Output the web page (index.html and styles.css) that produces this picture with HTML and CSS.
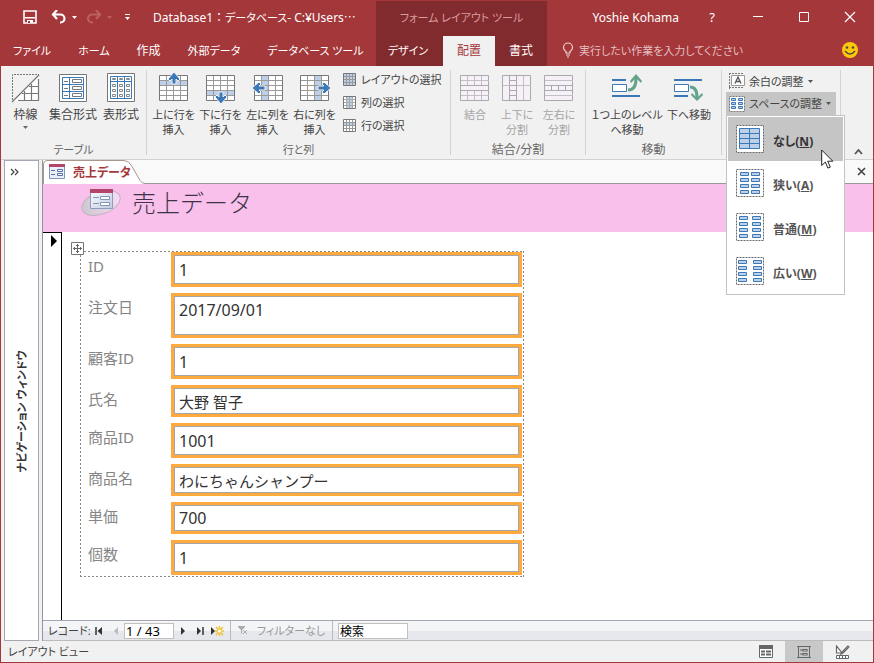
FILE: index.html
```html
<!DOCTYPE html>
<html lang="ja">
<head>
<meta charset="utf-8">
<title>Database1</title>
<link rel="stylesheet" href="styles.css">
</head>
<body>
<div class="window">
  <header class="header">
    <div class="header-left">
      <div class="title-row">
        <div class="quick">
          <button class="qa qa-save" aria-label="上書き保存"><svg width="14" height="14" viewBox="0 0 14 14"><path d="M1 1h12v12H1z" fill="none" stroke="#fff" stroke-width="1.600"/><path d="M2 7h10v1.500H2zM4 10h6v3H4z" fill="#fff"/><path d="M5 11h2v2H5z" fill="#a4373a"/></svg></button>
          <button class="qa qa-undo" aria-label="元に戻す"><svg width="28" height="14" viewBox="0 0 28 14"><path d="M6 0L2 4.500 6 9M2 4.500h7.500a4 4 0 0 1 0 8H9" fill="none" stroke="#fff" stroke-width="2.200"/><path d="M21 6h5l-2.500 3z" fill="#fff"/></svg></button>
          <button class="qa qa-redo" aria-label="やり直し"><svg width="28" height="14" viewBox="0 0 28 14"><path d="M10 0l4 4.500L10 9M14 4.500H6a4 4 0 0 0 0 8h1" fill="none" stroke="#bd5f62" stroke-width="2.200"/><path d="M21 6h5l-2.500 3z" fill="#bd5f62"/></svg></button>
          <button class="qa" aria-label="カスタマイズ"><svg width="7" height="8" viewBox="0 0 7 8"><path d="M1 1h5v1H1zM1 4h5L3.500 7z" fill="#fff"/></svg></button>
        </div>
        <span class="app-title">Database1<span class="full">：</span><span class="kana">データベース</span>- C:¥Users<span class="full">…</span></span>
      </div>
      <nav class="tabs">
        <a href="#" class="kana">ファイル</a><a href="#" class="kana">ホーム</a><a href="#">作成</a><a href="#" class="kana">外部データ</a><a href="#" class="kana">データベース ツール</a>
      </nav>
    </div>
    <div class="header-context">
      <div class="context-title kana">フォーム レイアウト ツール</div>
      <nav class="context-tabs"><a href="#" class="kana">デザイン</a><a href="#" class="active">配置</a><a href="#">書式</a></nav>
    </div>
    <div class="header-right">
      <div class="title-row window-row">
        <span class="user">Yoshie Kohama</span>
        <button class="win" aria-label="ヘルプ">?</button>
        <button class="win" aria-label="最小化"><svg width="12" height="12"><path d="M1 5.500h10" stroke="#fff"/></svg></button>
        <button class="win" aria-label="最大化"><svg width="12" height="12"><path d="M1.500 1.500h9v9h-9z" fill="none" stroke="#fff"/></svg></button>
        <button class="win" aria-label="閉じる"><svg width="12" height="12"><path d="M1 1l10 10M11 1L1 11" stroke="#fff" stroke-width="1.200"/></svg></button>
      </div>
      <div class="tell-row">
        <svg width="12" height="16" viewBox="0 0 12 16"><path d="M4 11V9.500C2.500 8.500 1.500 7 1.500 5.500a4.500 4.500 0 0 1 9 0C10.500 7 9.500 8.500 8 9.500V11zM4 13h4M5 15h2" fill="none" stroke="#f0d5d6" stroke-width="1.200"/></svg>
        <a href="#" class="kana">実行したい作業を入力してください</a>
        <button class="smile" aria-label="フィードバック"><svg width="18" height="18" viewBox="0 0 18 18"><circle cx="9" cy="9" r="8" fill="#fdc70c"/><circle cx="6" cy="6.500" r="1.300" fill="#4b4a3a"/><circle cx="12" cy="6.500" r="1.300" fill="#4b4a3a"/><path d="M4 10q5 6 10 0" fill="none" stroke="#4b4a3a" stroke-width="1.300"/></svg></button>
      </div>
    </div>
  </header>

  <section class="ribbon">
    <div class="group g-table">
      <div class="tools">
        <button class="tool w47"><svg width="30" height="30" viewBox="0 0 30 30"><path d="M28 2L2 28h26z" fill="#fff"/><path d="M1.500 27V1.500H28" fill="none" stroke="#777" stroke-dasharray="2 1"/><path d="M1 29L28 2M7 27.500h20.500V6M20.500 11v17M13.500 18v10M11 20.500h17M18 13.500h10" fill="none" stroke="#777" stroke-width="1.200"/></svg><span>枠線</span><svg class="caret" width="5" height="3"><path d="M0 0h5L2.500 3z" fill="#666"/></svg></button>
        <button class="tool w48"><svg width="30" height="30" viewBox="0 0 30 30"><path d="M1.500 1.500h27v27h-27z" fill="#fff" stroke="#777"/><path d="M4.500 4.500h21v21h-21zM11.500 4v22M4 11.500h22M4 18.500h22" fill="none" stroke="#3b78b8"/><path d="M6 8.500h4M6 15.500h4M6 22.500h4M14.500 6.500h9v3h-9zM14.500 13.500h9v3h-9zM14.500 20.500h9v3h-9z" fill="none" stroke="#777"/></svg><span>集合形式</span></button>
        <button class="tool w48"><svg width="30" height="30" viewBox="0 0 30 30"><path d="M1.500 .5h27v28h-27z" fill="#fff" stroke="#777"/><path d="M4.500 3.500h21v22h-21zM11.500 3v23M18.500 3v23M4 8.500h22" fill="none" stroke="#3b78b8"/><path d="M6.500 5.500h3v1h-3zM13.500 5.500h3v1h-3zM20.500 5.500h3v1h-3zM6.500 11.500h3v2h-3zM13.500 11.500h3v2h-3zM20.500 11.500h3v2h-3zM6.500 16.500h3v2h-3zM13.500 16.500h3v2h-3zM20.500 16.500h3v2h-3zM6.500 21.500h3v2h-3zM13.500 21.500h3v2h-3zM20.500 21.500h3v2h-3z" fill="none" stroke="#888"/></svg><span>表形式</span></button>
      </div>
      <div class="caption kana">テーブル</div>
    </div>
    <div class="group g-rows">
      <div class="tools">
        <button class="tool w47 kana"><svg width="30" height="32" viewBox="0 0 30 32"><path d="M.5 3.500h28v25H.5z" fill="#fff"/><path d="M1 9h28v5H1z" fill="#bdd0e8"/><path d="M7.500 4v24M14.500 4v24M21.500 4v24M1 8.500h28M1 13.500h28M1 18.500h28M1 23.500h28" stroke="#999"/><path d="M.5 3.500h28v25H.5z" fill="none" stroke="#777"/><path d="M15 0l6 7-2 2-2-2v5h-4V7l-2 2-2-2z" fill="#3b78b8" stroke="#f1f1f1"/></svg><span>上に行を<br>挿入</span></button>
        <button class="tool w47 kana"><svg width="30" height="32" viewBox="0 0 30 32"><path d="M.5 3.500h28v25H.5z" fill="#fff"/><path d="M1 19h28v5H1z" fill="#bdd0e8"/><path d="M7.500 4v24M14.500 4v24M21.500 4v24M1 8.500h28M1 13.500h28M1 18.500h28M1 23.500h28" stroke="#999"/><path d="M.5 3.500h28v25H.5z" fill="none" stroke="#777"/><path d="M15 32l6-7-2-2-2 2v-5h-4v5l-2-2-2 2z" fill="#3b78b8" stroke="#f1f1f1"/></svg><span>下に行を<br>挿入</span></button>
        <button class="tool w47 kana"><svg width="32" height="32" viewBox="0 0 32 32"><path d="M2.500 3.500h28v25h-28z" fill="#fff"/><path d="M10 4h6v24h-6z" fill="#bdd0e8"/><path d="M9.500 4v24M16.500 4v24M23.500 4v24M3 8.500h28M3 13.500h28M3 18.500h28M3 23.500h28" stroke="#999"/><path d="M2.500 3.500h28v25h-28z" fill="none" stroke="#777"/><path d="M0 16l7-6 2 2-2 2h6v4H7l2 2-2 2z" fill="#3b78b8" stroke="#f1f1f1"/></svg><span>左に列を<br>挿入</span></button>
        <button class="tool w47 kana"><svg width="32" height="32" viewBox="0 0 32 32"><path d="M1.500 3.500h28v25h-28z" fill="#fff"/><path d="M16 4h6v24h-6z" fill="#bdd0e8"/><path d="M8.500 4v24M15.500 4v24M22.500 4v24M2 8.500h28M2 13.500h28M2 18.500h28M2 23.500h28" stroke="#999"/><path d="M1.500 3.500h28v25h-28z" fill="none" stroke="#777"/><path d="M32 16l-7-6-2 2 2 2h-6v4h6l-2 2 2 2z" fill="#3b78b8" stroke="#f1f1f1"/></svg><span>右に列を<br>挿入</span></button>
        <div class="stack kana">
          <button><svg width="14" height="14"><path d="M.5 .5h12v12H.5z" fill="#bdd0e8"/><path d="M3.500 1v12M6.500 1v12M9.500 1v12M1 3.500h12M1 6.500h12M1 9.500h12" stroke="#999"/><path d="M.5 .5h12v12H.5z" fill="none" stroke="#777"/></svg>レイアウトの選択</button>
          <button><svg width="14" height="14"><path d="M.5 .5h12v12H.5z" fill="#fff"/><path d="M4 1h5v12H4z" fill="#bdd0e8"/><path d="M3.500 1v12M6.500 1v12M9.500 1v12M1 3.500h12M1 6.500h12M1 9.500h12" stroke="#aaa"/><path d="M.5 .5h12v12H.5z" fill="none" stroke="#777"/></svg>列の選択</button>
          <button><svg width="14" height="14"><path d="M.5 .5h12v12H.5z" fill="#fff"/><path d="M1 4h12v3H1z" fill="#bdd0e8"/><path d="M3.500 1v12M6.500 1v12M9.500 1v12M1 3.500h12M1 6.500h12M1 9.500h12" stroke="#999"/><path d="M.5 .5h12v12H.5z" fill="none" stroke="#777"/></svg>行の選択</button>
        </div>
      </div>
      <div class="caption kana">行と列</div>
    </div>
    <div class="group g-merge">
      <div class="tools">
        <button class="tool w42 kana" disabled><svg width="30" height="32" viewBox="0 0 30 32"><path d="M.5 3.500h28v25H.5z" fill="#f6f1f8" stroke="#aaa"/><path d="M7.500 4v9M14.500 4v9M21.500 4v9M7.500 19v9M14.500 19v9M21.500 19v9M1 8.500h28M1 23.500h28" stroke="#c4bfc6"/><path d="M1 13.500h28M1 18.500h28" stroke="#aaa"/></svg><span>結合</span></button>
        <button class="tool w42 kana" disabled><svg width="30" height="32" viewBox="0 0 30 32"><path d="M.5 3.500h28v25H.5z" fill="#f6f1f8" stroke="#aaa"/><path d="M21.500 4v24M1 13.500h7M14 13.500h15" stroke="#c4bfc6"/><path d="M7.500 4v24M14.500 4v24M7 8.500h7M7 13.500h7M7 18.500h7M7 23.500h7" stroke="#aaa"/></svg><span>上下に<br>分割</span></button>
        <button class="tool w42 kana" disabled><svg width="30" height="32" viewBox="0 0 30 32"><path d="M.5 3.500h28v25H.5z" fill="#f6f1f8" stroke="#aaa"/><path d="M1 8.500h28M1 23.500h28" stroke="#c4bfc6"/><path d="M1 13.500h28M1 18.500h28M7.500 14v4M14.500 14v4M21.500 14v4" stroke="#aaa"/></svg><span>左右に<br>分割</span></button>
      </div>
      <div class="caption">結合/分割</div>
    </div>
    <div class="group g-move">
      <div class="tools">
        <button class="tool w76 kana"><svg width="32" height="32" viewBox="0 0 32 32"><path d="M1 8h14M1 24h28" stroke="#3b78b8" stroke-width="2"/><path d="M1.500 12.500h14v7h-14z" fill="#fff" stroke="#3b78b8"/><path d="M17 18q8 0 8-11" fill="none" stroke="#62a389" stroke-width="3"/><path d="M19 9l6-7 6 7-1 2-4-4h-2l-4 4z" fill="#62a389"/></svg><span>１つ上のレベル<br>へ移動</span></button>
        <button class="tool w48 kana"><svg width="32" height="32" viewBox="0 0 32 32"><path d="M1 8h28M1 24h14" stroke="#3b78b8" stroke-width="2"/><path d="M1.500 12.500h14v7h-14z" fill="#fff" stroke="#3b78b8"/><path d="M17 15q7 0 7 10" fill="none" stroke="#62a389" stroke-width="3"/><path d="M18 23l6 6 6-6-1-2-4 4h-2l-4-4z" fill="#62a389"/></svg><span>下へ移動</span></button>
      </div>
      <div class="caption">移動</div>
    </div>
    <div class="group place kana">
      <button class="drop"><svg width="16" height="16" viewBox="0 0 16 16"><path d="M.5 0v16M0 .5h15M0 14.500h15" stroke="#777" stroke-dasharray="2 1"/><path d="M2.500 2.500h13v10h-13z" fill="#fff" stroke="#999"/><path d="M6 10.500L9 4l3 6.500M7.500 8.500h3" fill="none" stroke="#555" stroke-width="1.300"/></svg>余白の調整<svg width="5" height="3"><path d="M0 0h5L2.500 3z" fill="#555"/></svg></button>
      <div class="drop-wrap">
        <button class="drop open" aria-expanded="true"><svg width="16" height="16" viewBox="0 0 16 16"><path d="M.5 .5h15v15H.5z" fill="#fff" stroke="#777" stroke-dasharray="2 1"/><path d="M2.500 2.500h4v2h-4zM9.500 2.500h4v2h-4zM2.500 6.500h4v2h-4zM9.500 6.500h4v2h-4zM2.500 10.500h4v2h-4zM9.500 10.500h4v2h-4z" fill="#bdd0e8" stroke="#3b78b8"/></svg>スペースの調整<svg width="5" height="3"><path d="M0 0h5L2.500 3z" fill="#555"/></svg></button>
        <div class="menu" role="menu">
          <button role="menuitem" class="hot"><svg width="28" height="28" viewBox="0 0 28 28"><path d="M.5 .5h27v27H.5z" fill="#fff" stroke="#666" stroke-dasharray="2 1"/><path d="M3.500 3.500h20v20h-20zM13.500 3v21M3 8.500h21M3 13.500h21M3 18.500h21" fill="#bdd0e8" stroke="#3b78b8"/></svg><span>なし(<u>N</u>)</span></button>
          <button role="menuitem"><svg width="28" height="28" viewBox="0 0 28 28"><path d="M.5 .5h27v27H.5z" fill="#fff" stroke="#666" stroke-dasharray="2 1"/><path d="M4.500 3.500h8v3h-8zM15.500 3.500h8v3h-8zM4.500 9.500h8v3h-8zM15.500 9.500h8v3h-8zM4.500 15.500h8v3h-8zM15.500 15.500h8v3h-8zM4.500 21.500h8v3h-8zM15.500 21.500h8v3h-8z" fill="#bdd0e8" stroke="#3b78b8"/></svg><span>狭い(<u>A</u>)</span></button>
          <button role="menuitem"><svg width="28" height="28" viewBox="0 0 28 28"><path d="M.5 .5h27v27H.5z" fill="#fff" stroke="#666" stroke-dasharray="2 1"/><path d="M3.500 3.500h8v3h-8zM16.500 3.500h8v3h-8zM3.500 9.500h8v3h-8zM16.500 9.500h8v3h-8zM3.500 15.500h8v3h-8zM16.500 15.500h8v3h-8zM3.500 21.500h8v3h-8zM16.500 21.500h8v3h-8z" fill="#bdd0e8" stroke="#3b78b8"/></svg><span>普通(<u>M</u>)</span></button>
          <button role="menuitem"><svg width="28" height="28" viewBox="0 0 28 28"><path d="M.5 .5h27v27H.5z" fill="#fff" stroke="#666" stroke-dasharray="2 1"/><path d="M2.500 3.500h8v3h-8zM17.500 3.500h8v3h-8zM2.500 9.500h8v3h-8zM17.500 9.500h8v3h-8zM2.500 15.500h8v3h-8zM17.500 15.500h8v3h-8zM2.500 21.500h8v3h-8zM17.500 21.500h8v3h-8z" fill="#bdd0e8" stroke="#3b78b8"/></svg><span>広い(<u>W</u>)</span></button>
          <svg class="pointer" width="13" height="20" viewBox="0 0 13 20"><path d="M.7 1v15.500l3.600-3.400 2.600 6 2.400-1-2.600-5.900h5.100z" fill="#fff" stroke="#222"/></svg>
        </div>
      </div>
    </div>
    <button class="collapse" aria-label="リボンを折りたたむ"><svg width="9" height="6"><path d="M1 5l3.500-4L8 5" fill="none" stroke="#555" stroke-width="1.800"/></svg></button>
  </section>

  <main class="work">
    <aside class="navpane">
      <button class="expand" aria-label="開く"><svg width="10" height="8"><path d="M1 1l3 3-3 3M5 1l3 3-3 3" fill="none" stroke="#444" stroke-width="1.200"/></svg></button>
      <div class="nav-title kana"><span>ナビゲーション ウィンドウ</span></div>
    </aside>
    <section class="doc">
      <div class="doc-tabs">
        <a href="#" class="doc-tab">
          <svg class="tab-shape" width="102" height="24" viewBox="0 0 102 24"><path d="M.5 24V4Q1 .5 4 .5h77q5 0 8 6l8 14q2 3 5 3V24z" fill="#fff"/><path d="M.5 24V4Q1 .5 4 .5h77q5 0 8 6l8 14q2 3 5 3" fill="none" stroke="#a8978c"/></svg>
          <svg class="tab-icon" width="16" height="16" viewBox="0 0 16 16"><path d="M.5 1.500h15v13H.5z" fill="#eaf0fa" stroke="#8496ba"/><path d="M0 0h16v3H0z" fill="#b3456b"/><path d="M2 6.500h4M2 10.500h4" stroke="#5a6da0"/><path d="M8.500 5.500h5v2h-5zM8.500 9.500h5v2h-5z" fill="#fff" stroke="#5a6da0"/></svg>
          <span>売上データ</span>
        </a>
        <button class="doc-close" aria-label="閉じる"><svg width="9" height="9"><path d="M1 1l7 7M8 1L1 8" stroke="#444" stroke-width="1.600"/></svg></button>
      </div>
      <div class="form-head">
        <svg width="42" height="32" viewBox="0 0 42 32"><defs><linearGradient id="disc"><stop offset="0" stop-color="#ccc7d0"/><stop offset="1" stop-color="#f7dcf2"/></linearGradient><linearGradient id="sheet" x2="1" y2="1"><stop offset="0" stop-color="#fff"/><stop offset="1" stop-color="#bfcae0"/></linearGradient></defs><ellipse cx="20" cy="19" rx="20" ry="11" transform="rotate(-20 20 19)" fill="url(#disc)" stroke="#c0b0c0"/><path d="M9.500 6.500h22v18h-22z" fill="url(#sheet)" stroke="#8d9dbd"/><path d="M9 5h23v4H9z" fill="#b3456b"/><path d="M12 13.500h6M12 19.500h6" stroke="#8494ba"/><path d="M19.500 12.500h9v3h-9zM19.500 18.500h9v3h-9z" fill="#fff" stroke="#8494ba"/></svg>
        <h1>売上データ</h1>
      </div>
      <div class="form-body">
        <div class="selector"><svg width="7" height="12"><path d="M0 0v12l6-6z" fill="#000"/></svg></div>
        <form class="layout">
          <svg class="handle" width="13" height="13" viewBox="0 0 13 13"><path d="M.5 .5h12v12H.5z" fill="#fff" stroke="#777"/><path d="M6.500 2v9M2 6.500h9M5 3.500h3M5 9.500h3M3.500 5v3M9.500 5v3" stroke="#666"/></svg>
          <label for="f1">ID</label><input id="f1" class="h35 num" value="1">
          <label for="f2">注文日</label><div class="tall"><input id="f2" class="num" value="2017/09/01"></div>
          <label for="f3">顧客ID</label><input id="f3" class="h35 num" value="1">
          <label for="f4">氏名</label><input id="f4" class="h32" value="大野 智子">
          <label for="f5">商品ID</label><input id="f5" class="h35 num" value="1001">
          <label for="f6">商品名</label><input id="f6" class="h32" value="わにちゃんシャンプー">
          <label for="f7">単価</label><input id="f7" class="h32 num" value="700">
          <label for="f8">個数</label><input id="f8" class="h35 num" value="1">
        </form>
      </div>
      <div class="record-bar">
        <label for="rec" class="kana">レコード:</label>
        <button aria-label="先頭"><svg width="8" height="8"><path d="M1 0v8" stroke="#333" stroke-width="1.500"/><path d="M7 0v8L2.500 4z" fill="#333"/></svg></button>
        <button aria-label="前" disabled><svg width="8" height="8"><path d="M6 0v8L2 4z" fill="#bbb"/></svg></button>
        <input id="rec" class="rec" value="1 / 43">
        <button aria-label="次"><svg width="8" height="8"><path d="M2 0v8l4-4z" fill="#333"/></svg></button>
        <button aria-label="最終"><svg width="8" height="8"><path d="M1 0v8l4-4z" fill="#333"/><path d="M7 0v8" stroke="#333" stroke-width="1.500"/></svg></button>
        <button aria-label="新規"><svg width="14" height="10" viewBox="0 0 14 10"><path d="M1 1v8l4-4z" fill="#333"/><path d="M9.500 0v10M5 5h9M6 1l7 8M13 1L6 9" stroke="#f0c437" stroke-width="1.500"/><circle cx="9.500" cy="5" r="1.500" fill="#fff"/></svg></button>
        <button class="filter kana" disabled><svg width="10" height="9" viewBox="0 0 10 9"><path d="M0 0h7v1L4 4v4L3 7V4L0 1z" fill="#aaa"/><path d="M5 4l4 4M9 4L5 8" stroke="#aaa"/></svg>フィルターなし</button>
        <input class="search" value="検索" aria-label="検索">
      </div>
    </section>
  </main>

  <footer class="status">
    <span class="kana">レイアウト ビュー</span>
    <div class="views">
      <button aria-label="フォーム ビュー"><svg width="14" height="13" viewBox="0 0 14 13"><path d="M.5 .5h13v12H.5z" fill="#fff" stroke="#666"/><path d="M0 0h14v4H0z" fill="#666"/><path d="M2 6.500h4M2 9.500h4M7 6.500h5M7 9.500h5" stroke="#666" stroke-width="2"/></svg></button>
      <button class="on" aria-label="レイアウト ビュー"><svg width="14" height="14" viewBox="0 0 14 14"><path d="M1.500 1v12M12.500 1v12M0 1.500h14M0 12.500h14" stroke="#666"/><path d="M3 5h3M3 9h3" stroke="#666"/><path d="M6 4.500h4v1.500H6zM6 8.500h4V10H6z" fill="#fff" stroke="#666" stroke-width="1.200"/></svg></button>
      <button aria-label="デザイン ビュー"><svg width="15" height="14" viewBox="0 0 15 14"><path d="M1.500 1v7H7zM13 1L7 7l-1 2 2-1 6-6z" fill="#fff" stroke="#666" stroke-width="1.200"/><path d="M1.500 10.500h12v3h-12zM4.500 11v2M7.500 11v2M10.500 11v2" fill="#fff" stroke="#666"/></svg></button>
    </div>
  </footer>
</div>
</body>
</html>
```
FILE: styles.css
```css
* { box-sizing: border-box; }
html, body { height: 100%; margin: 0; }
body {
  font: 12px/15px "Noto Sans", "Noto Sans CJK JP", sans-serif;
  font-feature-settings: "palt";
  color: #444;
}
button, input {
  font: inherit;
  font-feature-settings: inherit;
  color: inherit;
  border: 0;
  padding: 0;
  margin: 0;
  background: none;
  border-radius: 0;
}
a { color: inherit; text-decoration: none; }
svg { display: block; flex: none; }
.kana { font-size: 11px; }
.full { font-family: "Noto Sans CJK JP", sans-serif; font-feature-settings: normal; }

.window {
  min-height: 100vh;
  display: flex;
  flex-direction: column;
  border: 1px solid #a4373a;
  border-top: 0;
  background: #f1f1f1;
}

/* Title bar and tabs */
.header { display: flex; height: 66px; background: #a4373a; color: #fff; }
.header-left { flex: none; width: 375px; }
.title-row { display: flex; align-items: center; height: 34px; margin-bottom: 2px; white-space: nowrap; }
.quick { display: flex; align-items: center; width: 152px; padding-left: 22px; }
.qa-save { margin-right: 14px; }
.qa-undo { margin-right: 7px; }
.qa-redo { margin-right: 10px; }
.tabs { display: flex; gap: 27px; padding: 7px 0 0 12px; white-space: nowrap; }
.header-context {
  flex: none;
  width: 171px;
  margin-top: 1px;
  background: #822b2e;
  display: flex;
  flex-direction: column;
}
.context-title { height: 35px; line-height: 33px; text-align: center; color: #d99c9e; }
.context-tabs { display: flex; flex: 1; line-height: 29px; }
.context-tabs a { flex: 1 1 0; text-align: center; }
.context-tabs a:first-child { flex: 0 0 67px; padding-right: 3px; }
.context-tabs .active { background: #f1f1f1; color: #a4373a; }
.header-right { flex: 1; min-width: 0; }
.window-row { justify-content: flex-end; }
.user { margin-right: 10px; }
.win { width: 46px; height: 32px; display: grid; place-items: center; font-size: 13px; }
.tell-row { display: flex; align-items: center; height: 28px; padding: 0 14px 0 15px; gap: 5px; color: #e3bfc0; white-space: nowrap; }
.smile { margin-left: auto; }

/* Ribbon */
.ribbon { display: flex; height: 94px; padding-top: 4px; border-bottom: 1px solid #d2d2d2; white-space: nowrap; }
.group {
  flex: none;
  display: flex;
  flex-direction: column;
  justify-content: space-between;
  height: 85px;
  padding: 0 3px;
  border-right: 1px solid #d2d2d2;
}
.g-table { width: 146px; padding: 0 1px; }
.g-rows { width: 304px; }
.g-merge { width: 135px; }
.g-move { width: 136px; }
.tools { display: flex; align-items: flex-start; padding-top: 2px; }
.caption { text-align: center; line-height: 10px; color: #666; }
.tool { flex: none; display: flex; flex-direction: column; align-items: center; text-align: center; }
.tool > svg:first-child { height: 32px; margin-bottom: 3px; }
.tool .caret { margin-top: 4px; }
.tool:disabled { color: #a5a5a5; }
.w42 { width: 42px; }
.w47 { width: 47px; }
.w48 { width: 48px; }
.w76 { width: 76px; }
.stack { display: flex; flex-direction: column; gap: 8px; padding: 0 0 0 5px; }
.stack button { display: flex; align-items: center; gap: 4px; }
.place { width: 119px; padding: 0 4px; justify-content: flex-start; }
.drop { display: flex; align-items: center; gap: 4px; height: 22px; padding: 0 3px; }
.drop.open { background: #c5c5c5; width: 110px; height: 23px; }
.drop-wrap { position: relative; }
.menu {
  position: absolute;
  z-index: 5;
  top: 23px;
  left: 0;
  width: 119px;
  padding: 1px;
  background: #fff;
  border: 1px solid #c3c3c3;
}
.menu button { display: flex; align-items: center; gap: 9px; width: 100%; height: 44px; padding-left: 8px; font-size: 12px; font-weight: 700; color: #555; }
.menu span { padding-top: 4px; }
.menu .hot { background: #c5c5c5; color: #333; }
.pointer { position: absolute; left: 94px; top: 33px; }
.collapse { align-self: flex-end; margin: 0 10px 4px auto; }

/* Work area */
.work { flex: 1; display: flex; padding-left: 3px; }
.navpane {
  flex: none;
  width: 35px;
  margin-right: 3px;
  display: flex;
  flex-direction: column;
  background: #fff;
  border: 1px solid #a5a8b2;
}
.expand { height: 22px; padding-left: 5px; }
.nav-title { flex: 1; display: grid; place-items: center; font-weight: 700; color: #333; }
.nav-title span { writing-mode: vertical-rl; text-orientation: sideways; transform: rotate(180deg); white-space: nowrap; }
.doc { flex: 1; min-width: 0; display: flex; flex-direction: column; background: #fff; border-left: 1px solid #92959f; }
.doc-tabs { display: flex; justify-content: space-between; height: 24px; background: #f9f9f9; border-bottom: 1px solid #999; }
.doc-tab { position: relative; display: flex; align-items: center; gap: 8px; width: 102px; height: 24px; padding-left: 6px; font-weight: 700; color: #a4373a; white-space: nowrap; }
.tab-shape { position: absolute; left: 0; top: 0; }
.tab-icon, .doc-tab span { position: relative; }
.doc-close { padding: 0 7px; }
.form-head { display: flex; height: 48px; padding-left: 38px; gap: 9px; background: #f8c0eb; color: #3b3348; }
.form-head h1 { margin: 0; font: 300 24px/36px "Noto Sans CJK JP", sans-serif; font-feature-settings: normal; }
.form-body { flex: 1; display: flex; font-feature-settings: normal; }
.selector { flex: none; width: 19px; padding: 2px 0 0 8px; border-top: 1px solid #000; border-right: 1px solid #000; }
.layout {
  position: relative;
  align-self: flex-start;
  display: grid;
  grid-template-columns: 83px 351px;
  row-gap: 6px;
  margin: 19px 0 20px 18px;
  padding: 1px 2px 2px 8px;
  background:
    repeating-linear-gradient(90deg, #888 0 2px, transparent 2px 4px) top / 100% 1px no-repeat,
    repeating-linear-gradient(90deg, #888 0 2px, transparent 2px 4px) bottom / 100% 1px no-repeat,
    repeating-linear-gradient(#888 0 2px, transparent 2px 4px) left / 1px 100% no-repeat,
    repeating-linear-gradient(#888 0 2px, transparent 2px 4px) right / 1px 100% no-repeat;
  font-size: 15px;
}
.layout label { line-height: 28px; height: 28px; color: #858585; }
.layout > input, .tall {
  width: 100%;
  border: 3px solid #ffa93f;
  outline: 1px solid #a6a6a6;
  outline-offset: -4px;
  padding: 0 5px;
  color: #333;
}
.tall { height: 45px; }
.tall input { width: 100%; height: 28px; display: block; }
.layout .num { font-size: 16px; }
.h35 { height: 35px; }
.h32 { height: 32px; }
.handle { position: absolute; left: -9px; top: -9px; }

/* Record navigation */
.record-bar {
  display: flex;
  align-items: center;
  height: 21px;
  padding-left: 5px;
  border-top: 1px solid #a5a8b2;
  border-bottom: 1px solid #bbb;
  background: linear-gradient(#f4f5f7 50%, #e6e7ec 50%);
  white-space: nowrap;
}
.record-bar button { flex: none; width: 17px; height: 19px; display: flex; align-items: center; justify-content: center; }
.record-bar label { width: 42px; }
.record-bar input { height: 16px; border: 1px solid #c0c0c0; background: #fff; color: #000; padding: 0 1px; }
.record-bar .rec { width: 50px; font-size: 13px; }
.record-bar .filter { width: 103px; margin: 0 5px; gap: 9px; border: 1px solid #b9bbc4; border-width: 0 1px; color: #999; }
.record-bar .search { width: 70px; }

/* Status bar */
.status { display: flex; justify-content: space-between; align-items: center; height: 21px; padding-left: 7px; }
.views { display: flex; height: 21px; padding-right: 12px; }
.views button { width: 38px; display: grid; place-items: center; }
.views .on { background: #c8c8c8; }
```
